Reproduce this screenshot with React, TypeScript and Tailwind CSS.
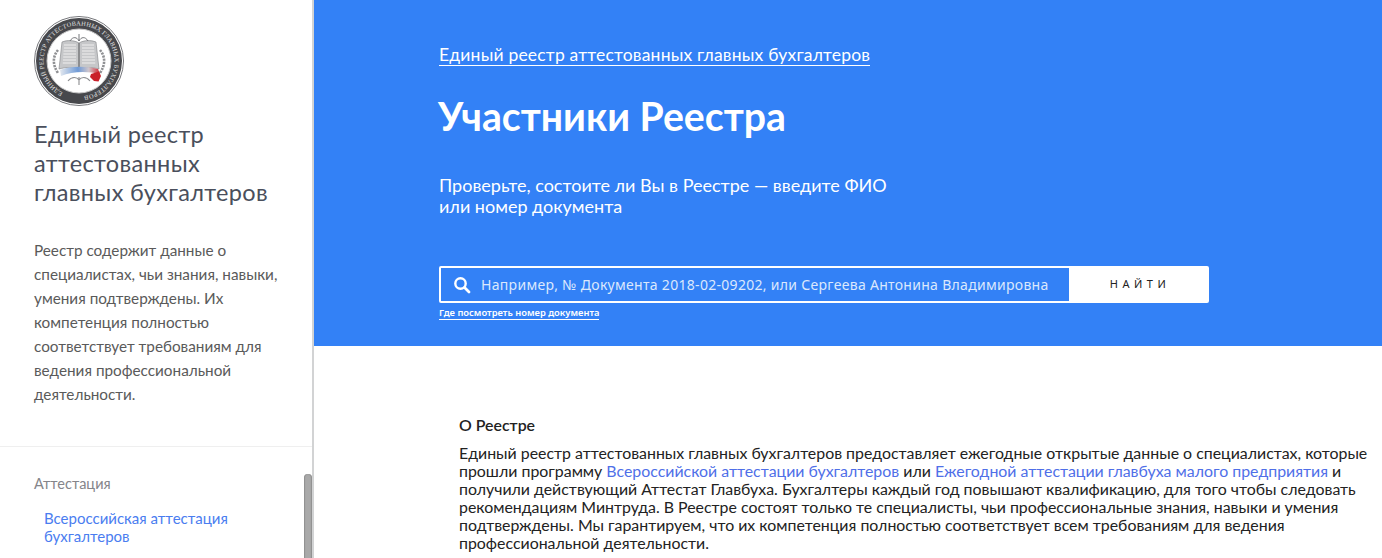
import React from "react";

function Logo() {
  return (
    <svg width="90" height="90" viewBox="0 0 90 90" className="block">
      <defs>
        <path id="ring" d="M28.9 76.6 A35.5 35.5 0 1 1 61.1 76.6 A35.5 35.5 0 0 1 28.9 76.6" />
        <linearGradient id="ribbon" x1="0" x2="1" y1="0" y2="0">
          <stop offset="0" stopColor="#e3e8ef" />
          <stop offset="0.45" stopColor="#6f9ad6" />
          <stop offset="0.72" stopColor="#cfc6cc" />
          <stop offset="1" stopColor="#d3222c" />
        </linearGradient>
      </defs>
      <circle cx="45" cy="45" r="44.5" fill="#fff" stroke="#77787c" strokeWidth="1" />
      <circle cx="45" cy="45" r="43" fill="#47484c" />
      <circle cx="45" cy="45" r="32" fill="#fff" stroke="#c9c9c9" strokeWidth="1" />
      <text fill="#e4e4e4" fontSize="6.3" fontFamily="'Liberation Serif', serif" letterSpacing="0.3">
        <textPath href="#ring">ЕДИНЫЙ РЕЕСТР АТТЕСТОВАННЫХ ГЛАВНЫХ БУХГАЛТЕРОВ</textPath>
      </text>
      <path d="M45 27 C40 24 33 24 28 26 L25 53 C32 51 40 51 45 55 C50 51 58 51 65 53 L62 26 C57 24 50 24 45 27 Z" fill="#c6c7c9" stroke="#808185" strokeWidth="0.6" />
      <path d="M45 27 V55" stroke="#66676a" strokeWidth="1.2" />
      <path d="M30 29 H42 M30 32 H42 M29.6 35 H42 M29.4 38 H42 M29.2 41 H42 M29 44 H42 M28.8 47 H42 M48 29 H60 M48 32 H60 M48 35 H60.4 M48 38 H60.6 M48 41 H60.8 M48 44 H61 M48 47 H61.2" stroke="#f0f0f0" strokeWidth="1.1" />
      <path d="M24 34 C19 40 18 48 24 57 M66 34 C71 40 72 48 66 57" fill="none" stroke="#8f9093" strokeWidth="2.6" strokeDasharray="2.2 1" />
      <path d="M36 25 C39 20 43 21 45 25 C47 21 51 20 54 25 M45 18 V25" fill="none" stroke="#77787c" strokeWidth="1" />
      <path d="M34 65 C38 60 43 61 45 64 C47 61 52 60 56 65 M45 61 V69" fill="none" stroke="#8a8b8e" strokeWidth="1.1" />
      <path d="M26 54 C36 50 52 50 64 53 L66 58 C54 55 38 55 27 60 Z" fill="url(#ribbon)" />
      <path d="M57 58 L65 55.5 L67 60 L64.5 65.5 L60 65 L56 61 Z" fill="#c9202a" />
    </svg>
  );
}

export default function App() {
  return (
    <div className="flex h-[558px] w-[1382px] overflow-hidden bg-white font-['Lato','Liberation_Sans',sans-serif]">
      <aside className="relative w-[314px] shrink-0 overflow-hidden border-r-2 border-[#d2d3d4]">
        <div className="px-[34px] pt-[16px]">
          <Logo />
          <h2 className="mt-[14px] whitespace-nowrap text-[23.5px] leading-[29px] tracking-[0.35px] text-[#4a4f5c]">
            Единый реестр<br />аттестованных<br />главных бухгалтеров
          </h2>
          <p className="mt-[31px] whitespace-nowrap text-[15.3px] leading-[24px] text-[#5a5a5a]">
            Реестр содержит данные о<br />специалистах, чьи знания, навыки,<br />умения подтверждены. Их<br />компетенция полностью<br />соответствует требованиям для<br />ведения профессиональной<br />деятельности.
          </p>
        </div>
        <div className="mt-[40px] border-t border-[#efefef] pl-[34px] pt-[28px]">
          <div className="text-[14.5px] leading-[18px] text-[#85858a]">Аттестация</div>
          <a className="mt-[16px] block pl-[10px] text-[15px] leading-[18px] text-[#4a7df0]">
            Всероссийская аттестация<br />бухгалтеров
          </a>
        </div>
        <div className="absolute left-[304px] top-[474px] h-[90px] w-[8px] rounded-t-[4px] bg-[#a9a9a9] shadow-[inset_1px_0_1px_#8f8f8f,inset_-1px_0_1px_#8f8f8f]" />
      </aside>
      <main className="min-w-0 flex-1">
        <section className="h-[346px] bg-[#3381f6] pl-[125px] pt-[43px] text-white">
          <a className="inline-block border-b border-white text-[17.5px] leading-[20px] tracking-[0.2px]">
            Единый реестр аттестованных главных бухгалтеров
          </a>
          <h1 className="ml-[-1px] mt-[26px] text-[39.2px] font-bold leading-[46px]">Участники Реестра</h1>
          <p className="mt-[36px] text-[18px] leading-[21px]">
            Проверьте, состоите ли Вы в Реестре — введите ФИО<br />или номер документа
          </p>
          <div className="mt-[49px] flex h-[37px] w-[770px] rounded-[2px] border-2 border-white">
            <div className="flex min-w-0 flex-1 items-center pl-[12px]">
              <svg width="18" height="18" viewBox="0 0 18 18" fill="none" stroke="#fff" className="shrink-0">
                <circle cx="7.5" cy="7.5" r="5.2" strokeWidth="2.4" />
                <path d="M11.5 11.5 L16 16" strokeWidth="2.8" strokeLinecap="round" />
              </svg>
              <span className="ml-[10px] whitespace-nowrap font-['Noto_Sans',sans-serif] text-[14px] tracking-[0.3px] text-[#dbe8fd]">
                Например, № Документа 2018-02-09202, или Сергеева Антонина Владимировна
              </span>
            </div>
            <div className="flex w-[138px] shrink-0 items-center justify-center bg-white pl-[4px] font-['Noto_Sans',sans-serif] text-[11px] tracking-[4.5px] text-[#222]">
              НАЙТИ
            </div>
          </div>
          <a className="mt-[4px] block w-fit border-b border-white font-['Noto_Sans',sans-serif] text-[9.4px] font-semibold leading-[12px]">
            Где посмотреть номер документа
          </a>
        </section>
        <section className="whitespace-nowrap pl-[145px] pt-[70px] text-[15.9px] leading-[18px] text-[#222]">
          <h3 className="font-semibold">О Реестре</h3>
          <p className="mt-[10px]">
            Единый реестр аттестованных главных бухгалтеров предоставляет ежегодные открытые данные о специалистах, которые<br />
            прошли программу <a className="text-[#4f6fe8]">Всероссийской аттестации бухгалтеров</a> или <a className="text-[#4f6fe8]">Ежегодной аттестации главбуха малого предприятия</a> и<br />
            получили действующий Аттестат Главбуха. Бухгалтеры каждый год повышают квалификацию, для того чтобы следовать<br />
            рекомендациям Минтруда. В Реестре состоят только те специалисты, чьи профессиональные знания, навыки и умения<br />
            подтверждены. Мы гарантируем, что их компетенция полностью соответствует всем требованиям для ведения<br />
            профессиональной деятельности.
          </p>
        </section>
      </main>
    </div>
  );
}
